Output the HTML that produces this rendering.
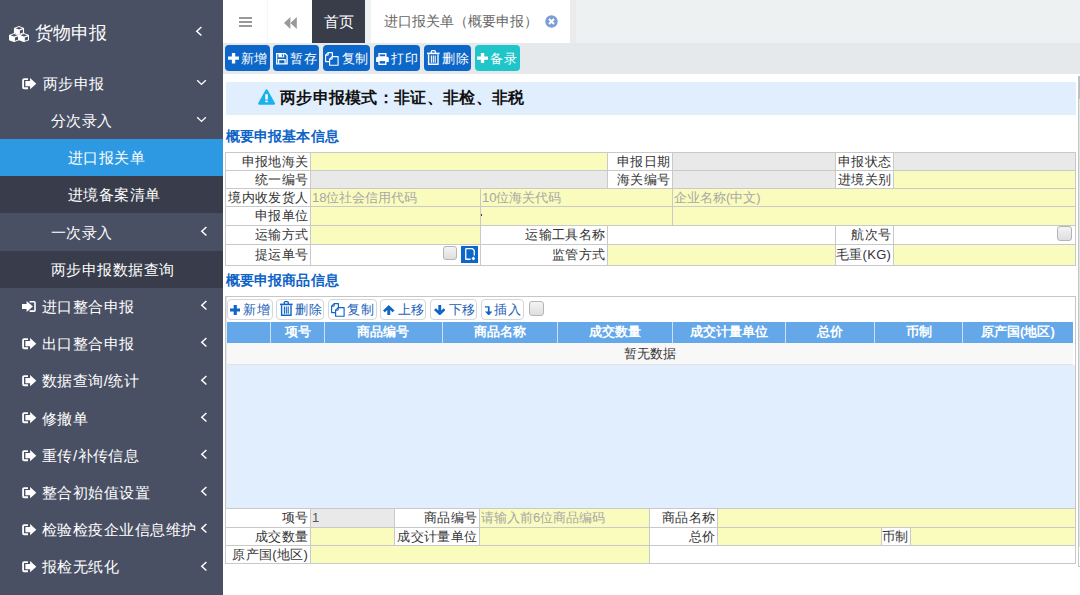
<!DOCTYPE html>
<html><head><meta charset="utf-8">
<style>
*{margin:0;padding:0;box-sizing:border-box}
html,body{width:1080px;height:595px;overflow:hidden;background:#fff;font-family:"Liberation Sans",sans-serif;color:#333}
.a{position:absolute}
#side{left:0;top:0;width:223px;height:595px;background:#4a5064}
.si{position:absolute;left:0;width:223px;height:37.2px;color:#fff;font-size:15px;letter-spacing:0.45px;line-height:37.2px;white-space:nowrap}
.si.dk{background:#393d4b}
.si.act{background:#2d99e2}
.si span{position:absolute;top:0}
.ic{position:absolute}
.chev{position:absolute}
/* top */
#tabs{left:223px;top:0;width:857px;height:43px;background:#eef1f2}
#tb{left:223px;top:43px;width:857px;height:30.5px;background:#e6e9ec}
.btn{position:absolute;top:45px;height:26.4px;border-radius:4px;background:#0c67c9;color:#fff;font-size:13px;letter-spacing:0.6px;line-height:27px;white-space:nowrap}
.btn span{position:absolute;top:0}
.lbl{position:absolute;font-size:13px;color:#333;text-align:right;white-space:nowrap;padding-right:1.8px;letter-spacing:0.3px;line-height:18px}
.cell{position:absolute}
.y{background:#f9fcbd}
.g{background:#e9e9e9}
.ph{position:absolute;font-size:13px;color:#a7a7a7;white-space:nowrap;line-height:18px}
.hl{position:absolute;height:1px;background:#c9c9c9}
.vl{position:absolute;width:1px;background:#c9c9c9}
.gb{position:absolute;top:299px;height:21px;border:1px solid #d6d6d6;border-radius:4px;background:#fff;color:#2160b8;font-size:13px;letter-spacing:0.4px;line-height:19.5px;white-space:nowrap}
.gb span{position:absolute;top:0}
.gh{position:absolute;top:322px;height:20.5px;color:#fff;font-weight:bold;font-size:13px;line-height:20px;text-align:center;white-space:nowrap}
.ck{position:absolute;width:15px;height:15px;border:1px solid #b5b5b5;border-radius:3px;background:linear-gradient(#f4f4f4,#dedede)}
</style></head><body>
<!-- SIDEBAR -->
<div id="side" class="a">
  <div class="a" style="left:0;top:0;width:223px;height:64.7px">
    <svg class="ic" style="left:9.1px;top:25.7px" width="20" height="16.2" viewBox="0 0 20.2 16.2"><path d="M10.1 0 L15.2 2 L15.2 7.1 L10.1 9.1 L5.0 7.1 L5.0 2 Z" fill="#fff"/><path d="M6.699999999999999 2.1 L10.1 0.9 L13.5 2.1 L10.1 3.4 Z" fill="#4a5064"/><path d="M11.0 4.5 L14.1 3.4 L14.1 6.6 L11.0 7.7 Z" fill="#4a5064"/><path d="M5.1 7.1 L10.2 9.1 L10.2 14.2 L5.1 16.2 L0.0 14.2 L0.0 9.1 Z" fill="#fff"/><path d="M1.6999999999999997 9.2 L5.1 8.0 L8.5 9.2 L5.1 10.5 Z" fill="#4a5064"/><path d="M6.0 11.6 L9.1 10.5 L9.1 13.7 L6.0 14.8 Z" fill="#4a5064"/><path d="M15.1 7.1 L20.2 9.1 L20.2 14.2 L15.1 16.2 L10.0 14.2 L10.0 9.1 Z" fill="#fff"/><path d="M11.7 9.2 L15.1 8.0 L18.5 9.2 L15.1 10.5 Z" fill="#4a5064"/><path d="M16.0 11.6 L19.1 10.5 L19.1 13.7 L16.0 14.8 Z" fill="#4a5064"/></svg>
    <span class="a" style="left:35.2px;top:19px;font-size:18px;line-height:28px;color:#fff">货物申报</span>
    <svg class="chev" style="left:195px;top:25.5px" width="8" height="11" viewBox="0 0 8 11"><path d="M6.4 1 L1.8 5.25 L6.4 9.5" stroke="#fff" stroke-width="1.5" fill="none"/></svg>
  </div>
  <div class="si" style="top:64.7px">
    <svg class="ic" style="left:21.7px;top:12.9px" width="15" height="12" viewBox="0 0 15 12"><path d="M6 1.1 H2.1 Q1.1 1.1 1.1 2.1 V9.2 Q1.1 10.2 2.1 10.2 H6" stroke="#fff" stroke-width="1.85" fill="none"/><path d="M3.4 3.1 H8.1 V0 L14.3 5.65 L8.1 11.3 V8.2 H3.4 Z" fill="#fff"/></svg>
    <span style="left:43px">两步申报</span>
    <svg class="chev" style="left:196.3px;top:14px" width="11" height="8" viewBox="0 0 11 8"><path d="M1.2 1.2 L5.5 5.4 L9.8 1.2" stroke="#fff" stroke-width="1.35" fill="none"/></svg>
  </div>
  <div class="si" style="top:101.9px">
    <span style="left:51px">分次录入</span>
    <svg class="chev" style="left:196.3px;top:14px" width="11" height="8" viewBox="0 0 11 8"><path d="M1.2 1.2 L5.5 5.4 L9.8 1.2" stroke="#fff" stroke-width="1.35" fill="none"/></svg>
  </div>
  <div class="si act" style="top:139.1px"><span style="left:68px">进口报关单</span></div>
  <div class="si dk" style="top:176.3px"><span style="left:68px">进境备案清单</span></div>
  <div class="si" style="top:213.5px">
    <span style="left:51px">一次录入</span>
    <svg class="chev" style="left:200.2px;top:12.4px" width="8" height="11" viewBox="0 0 8 11"><path d="M6.4 1 L1.8 5.25 L6.4 9.5" stroke="#fff" stroke-width="1.5" fill="none"/></svg>
  </div>
  <div class="si dk" style="top:250.7px"><span style="left:51px">两步申报数据查询</span></div>
  <div class="si" style="top:287.9px">
    <svg class="ic" style="left:21.5px;top:13.1px" width="15" height="12" viewBox="0 0 15 12"><path d="M7.6 0.8 H12.2 Q13 0.8 13 1.6 V9.3 Q13 10.1 12.2 10.1 H7.6" stroke="#fff" stroke-width="1.6" fill="none"/><path d="M0 3.1 H4.6 V0 L10.9 5.45 L4.6 10.9 V7.9 H0 Z" fill="#fff"/></svg>
    <span style="left:42px">进口整合申报</span>
    <svg class="chev" style="left:200.2px;top:12.4px" width="8" height="11" viewBox="0 0 8 11"><path d="M6.4 1 L1.8 5.25 L6.4 9.5" stroke="#fff" stroke-width="1.5" fill="none"/></svg>
  </div>
  <div class="si" style="top:325.1px" ><svg class="ic" style="left:21.7px;top:12.9px" width="15" height="12" viewBox="0 0 15 12"><path d="M6 1.1 H2.1 Q1.1 1.1 1.1 2.1 V9.2 Q1.1 10.2 2.1 10.2 H6" stroke="#fff" stroke-width="1.85" fill="none"/><path d="M3.4 3.1 H8.1 V0 L14.3 5.65 L8.1 11.3 V8.2 H3.4 Z" fill="#fff"/></svg><span style="left:42px">出口整合申报</span><svg class="chev" style="left:200.2px;top:12.4px" width="8" height="11" viewBox="0 0 8 11"><path d="M6.4 1 L1.8 5.25 L6.4 9.5" stroke="#fff" stroke-width="1.5" fill="none"/></svg></div>
  <div class="si" style="top:362.3px" ><svg class="ic" style="left:21.7px;top:12.9px" width="15" height="12" viewBox="0 0 15 12"><path d="M6 1.1 H2.1 Q1.1 1.1 1.1 2.1 V9.2 Q1.1 10.2 2.1 10.2 H6" stroke="#fff" stroke-width="1.85" fill="none"/><path d="M3.4 3.1 H8.1 V0 L14.3 5.65 L8.1 11.3 V8.2 H3.4 Z" fill="#fff"/></svg><span style="left:42px">数据查询/统计</span><svg class="chev" style="left:200.2px;top:12.4px" width="8" height="11" viewBox="0 0 8 11"><path d="M6.4 1 L1.8 5.25 L6.4 9.5" stroke="#fff" stroke-width="1.5" fill="none"/></svg></div>
  <div class="si" style="top:399.5px" ><svg class="ic" style="left:21.7px;top:12.9px" width="15" height="12" viewBox="0 0 15 12"><path d="M6 1.1 H2.1 Q1.1 1.1 1.1 2.1 V9.2 Q1.1 10.2 2.1 10.2 H6" stroke="#fff" stroke-width="1.85" fill="none"/><path d="M3.4 3.1 H8.1 V0 L14.3 5.65 L8.1 11.3 V8.2 H3.4 Z" fill="#fff"/></svg><span style="left:42px">修撤单</span><svg class="chev" style="left:200.2px;top:12.4px" width="8" height="11" viewBox="0 0 8 11"><path d="M6.4 1 L1.8 5.25 L6.4 9.5" stroke="#fff" stroke-width="1.5" fill="none"/></svg></div>
  <div class="si" style="top:436.7px" ><svg class="ic" style="left:21.7px;top:12.9px" width="15" height="12" viewBox="0 0 15 12"><path d="M6 1.1 H2.1 Q1.1 1.1 1.1 2.1 V9.2 Q1.1 10.2 2.1 10.2 H6" stroke="#fff" stroke-width="1.85" fill="none"/><path d="M3.4 3.1 H8.1 V0 L14.3 5.65 L8.1 11.3 V8.2 H3.4 Z" fill="#fff"/></svg><span style="left:42px">重传/补传信息</span><svg class="chev" style="left:200.2px;top:12.4px" width="8" height="11" viewBox="0 0 8 11"><path d="M6.4 1 L1.8 5.25 L6.4 9.5" stroke="#fff" stroke-width="1.5" fill="none"/></svg></div>
  <div class="si" style="top:473.9px" ><svg class="ic" style="left:21.7px;top:12.9px" width="15" height="12" viewBox="0 0 15 12"><path d="M6 1.1 H2.1 Q1.1 1.1 1.1 2.1 V9.2 Q1.1 10.2 2.1 10.2 H6" stroke="#fff" stroke-width="1.85" fill="none"/><path d="M3.4 3.1 H8.1 V0 L14.3 5.65 L8.1 11.3 V8.2 H3.4 Z" fill="#fff"/></svg><span style="left:42px">整合初始值设置</span><svg class="chev" style="left:200.2px;top:12.4px" width="8" height="11" viewBox="0 0 8 11"><path d="M6.4 1 L1.8 5.25 L6.4 9.5" stroke="#fff" stroke-width="1.5" fill="none"/></svg></div>
  <div class="si" style="top:511.1px" ><svg class="ic" style="left:21.7px;top:12.9px" width="15" height="12" viewBox="0 0 15 12"><path d="M6 1.1 H2.1 Q1.1 1.1 1.1 2.1 V9.2 Q1.1 10.2 2.1 10.2 H6" stroke="#fff" stroke-width="1.85" fill="none"/><path d="M3.4 3.1 H8.1 V0 L14.3 5.65 L8.1 11.3 V8.2 H3.4 Z" fill="#fff"/></svg><span style="left:42px">检验检疫企业信息维护</span><svg class="chev" style="left:200.2px;top:12.4px" width="8" height="11" viewBox="0 0 8 11"><path d="M6.4 1 L1.8 5.25 L6.4 9.5" stroke="#fff" stroke-width="1.5" fill="none"/></svg></div>
  <div class="si" style="top:548.3px" ><svg class="ic" style="left:21.7px;top:12.9px" width="15" height="12" viewBox="0 0 15 12"><path d="M6 1.1 H2.1 Q1.1 1.1 1.1 2.1 V9.2 Q1.1 10.2 2.1 10.2 H6" stroke="#fff" stroke-width="1.85" fill="none"/><path d="M3.4 3.1 H8.1 V0 L14.3 5.65 L8.1 11.3 V8.2 H3.4 Z" fill="#fff"/></svg><span style="left:42px">报检无纸化</span><svg class="chev" style="left:200.2px;top:12.4px" width="8" height="11" viewBox="0 0 8 11"><path d="M6.4 1 L1.8 5.25 L6.4 9.5" stroke="#fff" stroke-width="1.5" fill="none"/></svg></div>
</div>

<!-- TAB BAR -->
<div id="tabs" class="a">
  <div class="a" style="left:0;top:0;width:45px;height:43px;background:#fff;border-right:1px solid #f6f6f6"></div>
  <div class="a" style="left:45px;top:0;width:44px;height:43px;background:#fff"></div>
  <svg class="a" style="left:15.8px;top:16.8px" width="13" height="10" viewBox="0 0 13 10"><g fill="#999"><rect x="0" y="0" width="13" height="2"/><rect x="0" y="4" width="13" height="2"/><rect x="0" y="8" width="13" height="2"/></g></svg>
  <svg class="a" style="left:60.8px;top:17.1px" width="13" height="12" viewBox="0 0 13 12"><g fill="#999"><path d="M6.4 0 V12 L0 6 Z"/><path d="M12.8 0 V12 L6.4 6 Z"/></g></svg>
  <div class="a" style="left:89px;top:0;width:53px;height:43px;background:#393d49;color:#fff;font-size:15px;line-height:43px;text-align:center">首页</div>
  <div class="a" style="left:147.6px;top:0;width:199px;height:43px;background:#fff;color:#666;font-size:14.2px;line-height:43px;white-space:nowrap"><span class="a" style="left:13px;top:0">进口报关单（概要申报）</span>
    <svg class="a" style="left:174px;top:15px" width="13" height="13" viewBox="0 0 13 13"><circle cx="6.5" cy="6.5" r="6.2" fill="#7b9ed8"/><path d="M4 4 L9 9 M9 4 L4 9" stroke="#fff" stroke-width="2"/></svg>
  </div>
  <div class="a" style="left:346.6px;top:0;width:6px;height:43px;background:#e9ebec"></div>
</div>

<!-- TOOLBAR -->
<div id="tb" class="a"></div>
<div class="btn" style="left:225.3px;width:44.5px"><svg class="a" style="left:2.3px;top:8.2px" width="11" height="10.4" viewBox="0 0 10.5 10"><path d="M3.7 0 H6.9 V3.4 H10.5 V6.6 H6.9 V10 H3.7 V6.6 H0 V3.4 H3.7 Z" fill="#fff"/></svg><span style="left:15.6px">新增</span></div>
<div class="btn" style="left:273.4px;width:45.8px"><svg class="a" style="left:2.5px;top:8.2px" width="12" height="12" viewBox="0 0 12 12"><path d="M0.65 0.65 H9.2 L11.1 2.6 V10.85 H0.65 Z" stroke="#fff" stroke-width="1.3" fill="none"/><rect x="2.4" y="0.65" width="5.8" height="3.7" fill="#fff"/><rect x="5.9" y="1.3" width="1.2" height="2.3" fill="#0c67c9"/><path d="M2.6 10.85 V6.6 H9.1 V10.85" stroke="#fff" stroke-width="1.3" fill="none"/></svg><span style="left:17.1px">暂存</span></div>
<div class="btn" style="left:323.1px;width:47.2px"><svg class="a" style="left:1.9px;top:7px" width="14" height="14" viewBox="0 0 14 14"><path d="M3.2 0.6 H7.4 V4.6 M3.2 0.6 L0.6 3.2 V9.6 H4.6" stroke="#fff" stroke-width="1.15" fill="none" stroke-linejoin="round"/><path d="M3.2 0.6 V3.2 H0.6" stroke="#fff" stroke-width="1" fill="none"/><path d="M7.2 4.6 H13.1 V13.2 H4.6 V7.2 Z" stroke="#fff" stroke-width="1.15" fill="#0c67c9" stroke-linejoin="round"/><path d="M4.6 7.2 H7.2 V4.6" stroke="#fff" stroke-width="1" fill="none"/></svg><span style="left:18.5px">复制</span></div>
<div class="btn" style="left:374.2px;width:45.6px"><svg class="a" style="left:1.7px;top:8.2px" width="13" height="12" viewBox="0 0 13 12"><rect x="3" y="0.7" width="6.8" height="3.3" stroke="#fff" stroke-width="1.4" fill="none"/><path d="M1.5 3.8 H11.3 Q12.8 3.8 12.8 5.3 V9 H0 V5.3 Q0 3.8 1.5 3.8 Z" fill="#fff"/><rect x="3" y="7.4" width="6.8" height="3.9" stroke="#fff" stroke-width="1.4" fill="#0c67c9"/></svg><span style="left:17.1px">打印</span></div>
<div class="btn" style="left:423.9px;width:47.1px"><svg class="a" style="left:3.3px;top:5.1px" width="13" height="15" viewBox="0 0 13 15"><path d="M4.3 3 V1.6 Q4.3 0.7 5.2 0.7 H7.4 Q8.3 0.7 8.3 1.6 V3" stroke="#fff" stroke-width="1.3" fill="none"/><rect x="0" y="2.6" width="12.6" height="1.6" fill="#fff"/><path d="M1.6 4.2 V14.3 H11 V4.2" stroke="#fff" stroke-width="1.4" fill="none"/><path d="M4.4 5.5 V12.8 M6.3 5.5 V12.8 M8.2 5.5 V12.8" stroke="#fff" stroke-width="1.1"/></svg><span style="left:18.2px">删除</span></div>
<div class="btn" style="left:474.7px;width:45.3px;background:#20c5c9"><svg class="a" style="left:2.5px;top:8.1px" width="11" height="10.4" viewBox="0 0 10.5 10"><path d="M3.7 0 H6.9 V3.4 H10.5 V6.6 H6.9 V10 H3.7 V6.6 H0 V3.4 H3.7 Z" fill="#fff"/></svg><span style="left:15.8px">备录</span></div>
<!-- BANNER -->
<div class="a" style="left:226px;top:82px;width:849.5px;height:32.7px;background:#e0eefd"></div>
<svg class="a" style="left:258.1px;top:88.8px" width="17.2" height="16" viewBox="0 0 17.2 16"><path d="M8.6 0.3 Q9.3 0.3 9.7 1 L16.9 13.9 Q17.5 15.7 15.6 15.7 H1.6 Q-0.3 15.7 0.3 13.9 L7.5 1 Q7.9 0.3 8.6 0.3 Z" fill="#17b2ef"/><rect x="7.3" y="5.2" width="2.5" height="5.3" fill="#fff"/><rect x="7.3" y="11.6" width="2.5" height="1.6" fill="#fff"/></svg>
<div class="a" style="left:280px;top:86px;font-size:16px;line-height:24px;font-weight:bold;color:#111;white-space:nowrap;letter-spacing:0.3px">两步申报模式：非证、非检、非税</div>

<div class="a" style="left:225.5px;top:124.6px;font-size:14px;line-height:22px;font-weight:bold;color:#0e63c6;white-space:nowrap;letter-spacing:0.2px">概要申报基本信息</div>

<!-- FORM 1 -->
<div class="lbl" style="left:225px;top:153px;width:85px;height:17px;line-height:17px">申报地海关</div>
<div class="vl" style="left:225px;top:152px;height:18px;background:#c9c9c9"></div>
<div class="cell y" style="left:311px;top:153px;width:296px;height:17px"></div>
<div class="vl" style="left:310px;top:152px;height:18px;background:#c9c9c9"></div>
<div class="lbl" style="left:607px;top:153px;width:65px;height:17px;line-height:17px">申报日期</div>
<div class="vl" style="left:607px;top:152px;height:18px;background:#c9c9c9"></div>
<div class="cell g" style="left:673px;top:153px;width:162px;height:17px"></div>
<div class="vl" style="left:672px;top:152px;height:18px;background:#c9c9c9"></div>
<div class="lbl" style="left:835px;top:153px;width:58px;height:17px;line-height:17px">申报状态</div>
<div class="vl" style="left:835px;top:152px;height:18px;background:#c9c9c9"></div>
<div class="cell g" style="left:894px;top:153px;width:181px;height:17px"></div>
<div class="vl" style="left:893px;top:152px;height:18px;background:#c9c9c9"></div>
<div class="vl" style="left:1075px;top:152px;height:18px;background:#c9c9c9"></div>
<div class="lbl" style="left:225px;top:171px;width:85px;height:17px;line-height:17px">统一编号</div>
<div class="vl" style="left:225px;top:170px;height:18px;background:#c9c9c9"></div>
<div class="cell g" style="left:311px;top:171px;width:296px;height:17px"></div>
<div class="vl" style="left:310px;top:170px;height:18px;background:#c9c9c9"></div>
<div class="lbl" style="left:607px;top:171px;width:65px;height:17px;line-height:17px">海关编号</div>
<div class="vl" style="left:607px;top:170px;height:18px;background:#c9c9c9"></div>
<div class="cell g" style="left:673px;top:171px;width:162px;height:17px"></div>
<div class="vl" style="left:672px;top:170px;height:18px;background:#c9c9c9"></div>
<div class="lbl" style="left:835px;top:171px;width:58px;height:17px;line-height:17px">进境关别</div>
<div class="vl" style="left:835px;top:170px;height:18px;background:#c9c9c9"></div>
<div class="cell y" style="left:894px;top:171px;width:181px;height:17px"></div>
<div class="vl" style="left:893px;top:170px;height:18px;background:#c9c9c9"></div>
<div class="vl" style="left:1075px;top:170px;height:18px;background:#c9c9c9"></div>
<div class="lbl" style="left:225px;top:189px;width:85px;height:17px;line-height:17px">境内收发货人</div>
<div class="vl" style="left:225px;top:188px;height:18px;background:#c9c9c9"></div>
<div class="cell y" style="left:311px;top:189px;width:169px;height:17px"></div>
<div class="ph" style="left:312px;top:189px;line-height:17px;color:#a7a7a7">18位社会信用代码</div>
<div class="vl" style="left:310px;top:188px;height:18px;background:#c9c9c9"></div>
<div class="cell y" style="left:481px;top:189px;width:191px;height:17px"></div>
<div class="ph" style="left:482px;top:189px;line-height:17px;color:#a7a7a7">10位海关代码</div>
<div class="vl" style="left:480px;top:188px;height:18px;background:#c9c9c9"></div>
<div class="cell y" style="left:673px;top:189px;width:402px;height:17px"></div>
<div class="ph" style="left:674px;top:189px;line-height:17px;color:#a7a7a7">企业名称(中文)</div>
<div class="vl" style="left:672px;top:188px;height:18px;background:#c9c9c9"></div>
<div class="vl" style="left:1075px;top:188px;height:18px;background:#c9c9c9"></div>
<div class="lbl" style="left:225px;top:207px;width:85px;height:18px;line-height:18px">申报单位</div>
<div class="vl" style="left:225px;top:206px;height:19px;background:#c9c9c9"></div>
<div class="cell y" style="left:311px;top:207px;width:169px;height:18px"></div>
<div class="vl" style="left:310px;top:206px;height:19px;background:#c9c9c9"></div>
<div class="cell y" style="left:481px;top:207px;width:191px;height:18px"></div>
<div class="vl" style="left:480px;top:206px;height:19px;background:#c9c9c9"></div>
<div class="cell y" style="left:673px;top:207px;width:402px;height:18px"></div>
<div class="vl" style="left:672px;top:206px;height:19px;background:#c9c9c9"></div>
<div class="vl" style="left:1075px;top:206px;height:19px;background:#c9c9c9"></div>
<div class="lbl" style="left:225px;top:226px;width:85px;height:18px;line-height:18px">运输方式</div>
<div class="vl" style="left:225px;top:225px;height:19px;background:#c9c9c9"></div>
<div class="cell y" style="left:311px;top:226px;width:169px;height:18px"></div>
<div class="vl" style="left:310px;top:225px;height:19px;background:#c9c9c9"></div>
<div class="lbl" style="left:480px;top:226px;width:127px;height:18px;line-height:18px">运输工具名称</div>
<div class="vl" style="left:480px;top:225px;height:19px;background:#c9c9c9"></div>
<div class="vl" style="left:607px;top:225px;height:19px;background:#c9c9c9"></div>
<div class="lbl" style="left:835px;top:226px;width:58px;height:18px;line-height:18px">航次号</div>
<div class="vl" style="left:835px;top:225px;height:19px;background:#c9c9c9"></div>
<div class="vl" style="left:893px;top:225px;height:19px;background:#c9c9c9"></div>
<div class="vl" style="left:1075px;top:225px;height:19px;background:#c9c9c9"></div>
<div class="lbl" style="left:225px;top:245px;width:85px;height:20px;line-height:20px">提运单号</div>
<div class="vl" style="left:225px;top:244px;height:21px;background:#c9c9c9"></div>
<div class="vl" style="left:310px;top:244px;height:21px;background:#c9c9c9"></div>
<div class="lbl" style="left:480px;top:245px;width:127px;height:20px;line-height:20px">监管方式</div>
<div class="vl" style="left:480px;top:244px;height:21px;background:#c9c9c9"></div>
<div class="cell y" style="left:608px;top:245px;width:227px;height:20px"></div>
<div class="vl" style="left:607px;top:244px;height:21px;background:#c9c9c9"></div>
<div class="lbl" style="left:835px;top:245px;width:58px;height:20px;line-height:20px">毛重(KG)</div>
<div class="vl" style="left:835px;top:244px;height:21px;background:#c9c9c9"></div>
<div class="cell y" style="left:894px;top:245px;width:181px;height:20px"></div>
<div class="vl" style="left:893px;top:244px;height:21px;background:#c9c9c9"></div>
<div class="vl" style="left:1075px;top:244px;height:21px;background:#c9c9c9"></div>
<div class="hl" style="left:225px;top:152px;width:851px;background:#c9c9c9"></div>
<div class="hl" style="left:225px;top:170px;width:851px;background:#c9c9c9"></div>
<div class="hl" style="left:225px;top:188px;width:851px;background:#c9c9c9"></div>
<div class="hl" style="left:225px;top:206px;width:851px;background:#c9c9c9"></div>
<div class="hl" style="left:225px;top:225px;width:851px;background:#c9c9c9"></div>
<div class="hl" style="left:225px;top:244px;width:851px;background:#c9c9c9"></div>
<div class="hl" style="left:225px;top:265px;width:851px;background:#c9c9c9"></div>
<div class="ck" style="left:1057px;top:226px"></div>
<div class="ck" style="left:443px;top:246px;width:14px;height:14px"></div>
<svg class="a" style="left:461px;top:246px" width="17" height="17" viewBox="0 0 17 17"><rect width="17" height="17" fill="#0c67c9"/><path d="M4.75 2.55 H11.3 L13.25 4.5 V9.6 M9.6 13.25 H4.75 V2.55" stroke="#fff" stroke-width="1.3" fill="none" stroke-linejoin="round"/><path d="M12.4 10.6 L14.3 12.5 L12.4 14.4 L10.5 12.5 Z" fill="#fff"/></svg>
<div class="a" style="left:481px;top:214px;width:1px;height:2px;background:#6b2b2b"></div>

<div class="a" style="left:225.5px;top:269px;font-size:14px;line-height:22px;font-weight:bold;color:#0e63c6;white-space:nowrap;letter-spacing:0.2px">概要申报商品信息</div>

<!-- GOODS -->
<div class="a" style="left:225px;top:296px;width:851px;height:268px;border:1px solid #c6c6c6;border-bottom:none"></div>
<div class="a" style="left:226px;top:297px;width:1px;height:211px;background:#e6e6e6"></div>
<div class="gb" style="left:227.4px;width:45.20000000000002px"><svg class="a" style="left:1.5px;top:5px" width="10.5" height="10" viewBox="0 0 10.5 10"><path d="M3.7 0 H6.8 V3.5 H10.5 V6.5 H6.8 V10 H3.7 V6.5 H0 V3.5 H3.7 Z" fill="#0e64c8"/></svg><span style="left:14.8px">新增</span></div>
<div class="gb" style="left:276px;width:48.19999999999999px"><svg class="a" style="left:3px;top:1.4px" width="13" height="15" viewBox="0 0 13 15"><path d="M4.3 3 V1.6 Q4.3 0.7 5.2 0.7 H7.4 Q8.3 0.7 8.3 1.6 V3" stroke="#0e64c8" stroke-width="1.3" fill="none"/><rect x="0" y="2.6" width="12.6" height="1.6" fill="#0e64c8"/><path d="M1.6 4.2 V14.3 H11 V4.2" stroke="#0e64c8" stroke-width="1.4" fill="none"/><path d="M4.4 5.5 V12.8 M6.3 5.5 V12.8 M8.2 5.5 V12.8" stroke="#0e64c8" stroke-width="1.1"/></svg><span style="left:18.2px">删除</span></div>
<div class="gb" style="left:328.4px;width:48.200000000000045px"><svg class="a" style="left:1.6px;top:2.6px" width="14" height="14" viewBox="0 0 14 14"><path d="M3.2 0.6 H7.4 V4.6 M3.2 0.6 L0.6 3.2 V9.6 H4.6" stroke="#0e64c8" stroke-width="1.15" fill="none" stroke-linejoin="round"/><path d="M3.2 0.6 V3.2 H0.6" stroke="#0e64c8" stroke-width="1" fill="none"/><path d="M7.2 4.6 H13.1 V13.2 H4.6 V7.2 Z" stroke="#0e64c8" stroke-width="1.15" fill="#fff" stroke-linejoin="round"/><path d="M4.6 7.2 H7.2 V4.6" stroke="#0e64c8" stroke-width="1" fill="none"/></svg><span style="left:17.9px">复制</span></div>
<div class="gb" style="left:380px;width:46.10000000000002px"><svg class="a" style="left:2px;top:4.9px" width="11.5" height="10.5" viewBox="0 0 11.5 10.5"><path d="M5.75 0 L11.5 5.5 L9.6 7.3 L7.2 4.9 V10.5 H4.3 V4.9 L1.9 7.3 L0 5.5 Z" fill="#0e64c8"/></svg><span style="left:16.8px">上移</span></div>
<div class="gb" style="left:430.4px;width:47.0px"><svg class="a" style="left:2.2px;top:4.7px" width="11.5" height="10.5" viewBox="0 0 11.5 10.5"><path d="M5.75 10.5 L11.5 5 L9.6 3.2 L7.2 5.6 V0 H4.3 V5.6 L1.9 3.2 L0 5 Z" fill="#0e64c8"/></svg><span style="left:17.4px">下移</span></div>
<div class="gb" style="left:481.3px;width:42.30000000000001px"><svg class="a" style="left:2.4px;top:4.6px" width="7.5" height="10.5" viewBox="0 0 7.5 10.5"><path d="M0 1.2 H4.6 V6.5 H7.4 L3.7 10.5 L0 6.5 H2.9 V2.6 H0 Z" fill="#0e64c8"/></svg><span style="left:12.2px">插入</span></div>
<div class="ck" style="left:529px;top:301px"></div>
<div class="a" style="left:227px;top:322px;width:846px;height:20.5px;background:#64a8e9"></div>
<div class="gh" style="left:227px;width:43.75px"></div>
<div class="gh" style="left:270.75px;width:53.75px">项号</div>
<div class="a" style="left:270.25px;top:322px;width:1px;height:20.5px;background:#cde1f6"></div>
<div class="gh" style="left:324.5px;width:117.5px">商品编号</div>
<div class="a" style="left:324.0px;top:322px;width:1px;height:20.5px;background:#cde1f6"></div>
<div class="gh" style="left:442px;width:115.5px">商品名称</div>
<div class="a" style="left:441.5px;top:322px;width:1px;height:20.5px;background:#cde1f6"></div>
<div class="gh" style="left:557.5px;width:115.0px">成交数量</div>
<div class="a" style="left:557.0px;top:322px;width:1px;height:20.5px;background:#cde1f6"></div>
<div class="gh" style="left:672.5px;width:113.10000000000002px">成交计量单位</div>
<div class="a" style="left:672.0px;top:322px;width:1px;height:20.5px;background:#cde1f6"></div>
<div class="gh" style="left:785.6px;width:89.19999999999993px">总价</div>
<div class="a" style="left:785.1px;top:322px;width:1px;height:20.5px;background:#cde1f6"></div>
<div class="gh" style="left:874.8px;width:88.10000000000002px">币制</div>
<div class="a" style="left:874.3px;top:322px;width:1px;height:20.5px;background:#cde1f6"></div>
<div class="gh" style="left:962.9px;width:110.10000000000002px">原产国(地区)</div>
<div class="a" style="left:962.4px;top:322px;width:1px;height:20.5px;background:#cde1f6"></div>
<div class="a" style="left:227px;top:342.5px;width:846px;height:22px;background:#f8f8f8;border-bottom:1px solid #e3e0e6"></div>
<div class="a" style="left:624px;top:342.5px;font-size:13px;line-height:22px;color:#333;white-space:nowrap">暂无数据</div>
<div class="a" style="left:227px;top:365px;width:848px;height:143px;background:#e0eefd"></div>
<div class="lbl" style="left:225px;top:509px;width:85px;height:18px;line-height:18px">项号</div>
<div class="vl" style="left:225px;top:508px;height:19px;background:#c9c9c9"></div>
<div class="cell g" style="left:311px;top:509px;width:83px;height:18px"></div>
<div class="ph" style="left:312px;top:509px;line-height:18px;color:#555">1</div>
<div class="vl" style="left:310px;top:508px;height:19px;background:#c9c9c9"></div>
<div class="lbl" style="left:394px;top:509px;width:85px;height:18px;line-height:18px">商品编号</div>
<div class="vl" style="left:394px;top:508px;height:19px;background:#c9c9c9"></div>
<div class="cell y" style="left:480px;top:509px;width:169px;height:18px"></div>
<div class="ph" style="left:481px;top:509px;line-height:18px;color:#a7a7a7">请输入前6位商品编码</div>
<div class="vl" style="left:479px;top:508px;height:19px;background:#c9c9c9"></div>
<div class="lbl" style="left:649px;top:509px;width:68px;height:18px;line-height:18px">商品名称</div>
<div class="vl" style="left:649px;top:508px;height:19px;background:#c9c9c9"></div>
<div class="cell y" style="left:718px;top:509px;width:357px;height:18px"></div>
<div class="vl" style="left:717px;top:508px;height:19px;background:#c9c9c9"></div>
<div class="vl" style="left:1075px;top:508px;height:19px;background:#c9c9c9"></div>
<div class="lbl" style="left:225px;top:528px;width:85px;height:17px;line-height:17px">成交数量</div>
<div class="vl" style="left:225px;top:527px;height:18px;background:#c9c9c9"></div>
<div class="cell y" style="left:311px;top:528px;width:83px;height:17px"></div>
<div class="vl" style="left:310px;top:527px;height:18px;background:#c9c9c9"></div>
<div class="lbl" style="left:394px;top:528px;width:85px;height:17px;line-height:17px">成交计量单位</div>
<div class="vl" style="left:394px;top:527px;height:18px;background:#c9c9c9"></div>
<div class="cell y" style="left:480px;top:528px;width:169px;height:17px"></div>
<div class="vl" style="left:479px;top:527px;height:18px;background:#c9c9c9"></div>
<div class="lbl" style="left:649px;top:528px;width:68px;height:17px;line-height:17px">总价</div>
<div class="vl" style="left:649px;top:527px;height:18px;background:#c9c9c9"></div>
<div class="cell y" style="left:718px;top:528px;width:163px;height:17px"></div>
<div class="vl" style="left:717px;top:527px;height:18px;background:#c9c9c9"></div>
<div class="lbl" style="left:881px;top:528px;width:29px;height:17px;line-height:17px">币制</div>
<div class="vl" style="left:881px;top:527px;height:18px;background:#c9c9c9"></div>
<div class="cell y" style="left:911px;top:528px;width:164px;height:17px"></div>
<div class="vl" style="left:910px;top:527px;height:18px;background:#c9c9c9"></div>
<div class="vl" style="left:1075px;top:527px;height:18px;background:#c9c9c9"></div>
<div class="lbl" style="left:225px;top:546px;width:85px;height:17px;line-height:17px">原产国(地区)</div>
<div class="vl" style="left:225px;top:545px;height:18px;background:#c9c9c9"></div>
<div class="cell y" style="left:311px;top:546px;width:338px;height:17px"></div>
<div class="vl" style="left:310px;top:545px;height:18px;background:#c9c9c9"></div>
<div class="vl" style="left:649px;top:545px;height:18px;background:#c9c9c9"></div>
<div class="vl" style="left:1075px;top:545px;height:18px;background:#c9c9c9"></div>
<div class="hl" style="left:226px;top:508px;width:850px;background:#c9c9c9"></div>
<div class="hl" style="left:226px;top:527px;width:850px;background:#c9c9c9"></div>
<div class="hl" style="left:226px;top:545px;width:850px;background:#c9c9c9"></div>
<div class="hl" style="left:226px;top:563px;width:850px;background:#c9c9c9"></div>

<!-- right edge strip -->
<div class="a" style="left:1078px;top:76px;width:2px;height:491px;border-left:1px solid #c4c4c4;border-top:1px solid #c4c4c4;border-bottom:1px solid #c4c4c4"></div><div class="a" style="left:1079px;top:77px;width:1px;height:22px;background:#bdbdbd"></div><div class="a" style="left:1079px;top:99px;width:1px;height:448px;background:#e4e4e4"></div>
</body></html>
